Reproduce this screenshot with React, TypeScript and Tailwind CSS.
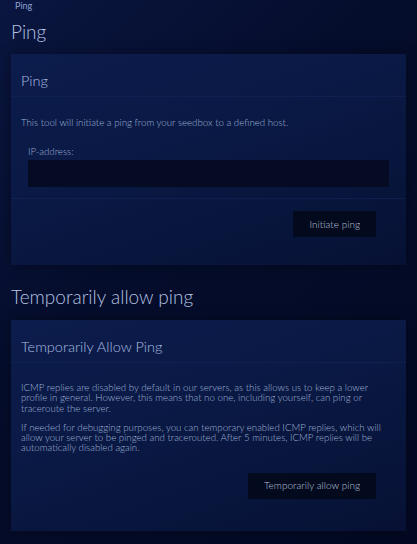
import React from 'react'

const font = { fontFamily: 'Lato, "Open Sans", sans-serif' }

function Card({
  title,
  children,
  action,
  className = '',
}: {
  title: string
  children: React.ReactNode
  action: string
  className?: string
}) {
  return (
    <section
      className={`bg-[linear-gradient(160deg,#0c1c4c_0%,#0a1944_45%,#061134_100%)] shadow-[0_0_12px_rgba(0,0,0,0.35)] ${className}`}
    >
      <header className="flex h-[43px] items-end border-b border-[#13245a]/60 px-[10px] pb-[6px]">
        <h3 className="text-[14.5px] font-light leading-[18px] text-[#a9bbe0]">{title}</h3>
      </header>
      {children}
      <div className="flex justify-end pr-[30px]">
        <button className="h-[26px] bg-[#040a1e] px-[16px] text-[10px] font-light text-[#b4c0dc]">
          {action}
        </button>
      </div>
    </section>
  )
}

export default function App() {
  return (
    <div
      style={font}
      className="min-h-[544px] w-full bg-[linear-gradient(135deg,#0a1640_0%,#050d2c_40%,#030922_100%)] px-[11px] text-[#9fb1d6]"
    >
      <p className="pl-[4px] pt-[1px] text-[9px] leading-[10px] text-[#8da3d4]">Ping</p>
      <h1 className="mt-[9px] text-[19px] font-light leading-[24px] text-[#b4c2e2]">Ping</h1>

      <Card title="Ping" action="Initiate ping" className="mt-[10px] h-[211px]">
        <div className="border-b border-[#13245a]/60 px-[10px] pb-[11px] pt-[19px]">
          <p className="text-[9.7px] font-light leading-[12px]">
            This tool will initiate a ping from your seedbox to a defined host.
          </p>
          <label className="mt-[17px] block pl-[7px] text-[9.7px] font-light leading-[12px]">
            IP-address:
          </label>
          <div className="mx-[7px] mt-[3px] h-[27px] bg-[#050b22]" />
        </div>
        <div className="h-[12px]" />
      </Card>

      <h2 className="mt-[20px] text-[19px] font-light leading-[24px] text-[#b4c2e2]">
        Temporarily allow ping
      </h2>

      <Card
        title="Temporarily Allow Ping"
        action="Temporarily allow ping"
        className="mt-[11px] h-[211px]"
      >
        <div className="pb-[20px] pl-[10px] pr-[13px] pt-[19px] text-[9.7px] font-light leading-[10.3px]">
          <p>
            ICMP replies are disabled by default in our servers, as this allows us to keep a lower
            profile in general. However, this means that no one, including yourself, can ping or
            traceroute the server.
          </p>
          <p className="mt-[9px]">
            If needed for debugging purposes, you can temporary enabled ICMP replies, which will
            allow your server to be pinged and tracerouted. After 5 minutes, ICMP replies will be
            automatically disabled again.
          </p>
        </div>
      </Card>
    </div>
  )
}
